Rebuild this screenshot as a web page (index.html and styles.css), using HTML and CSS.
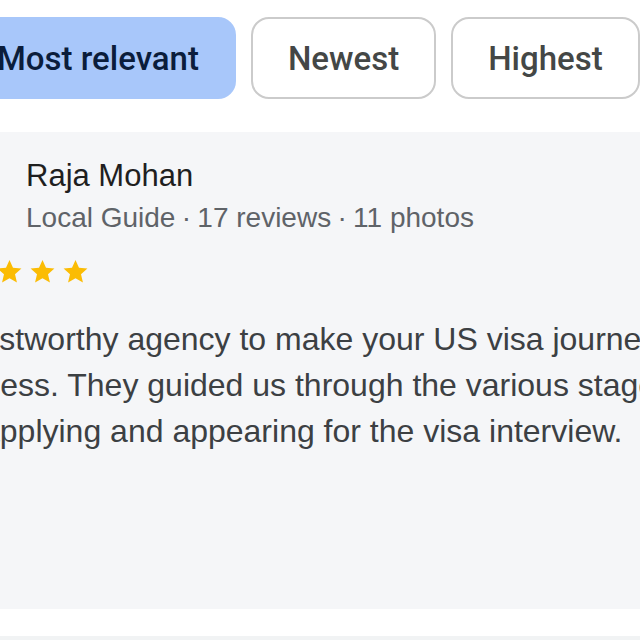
FILE: index.html
```html
<!DOCTYPE html>
<html lang="en">
<head>
<meta charset="utf-8">
<title>Reviews</title>
<link rel="stylesheet" href="styles.css">
</head>
<body>
<div class="page">
  <div class="chips">
    <div class="chip chip-active">Most relevant</div>
    <div class="chip">Newest</div>
    <div class="chip">Highest</div>
  </div>
  <div class="card">
    <div class="name">Raja Mohan</div>
    <div class="meta">Local Guide <span class="dot">·</span> 17 reviews <span class="dot">·</span> 11 photos</div>
    <div class="stars">
      <svg class="star" viewBox="0 0 24 24"><path d="M12 1.8l3.1 6.9 7.5.7-5.7 5 1.7 7.4L12 17.9l-6.6 3.9 1.7-7.4-5.7-5 7.5-.7z"/></svg>
      <svg class="star" viewBox="0 0 24 24"><path d="M12 1.8l3.1 6.9 7.5.7-5.7 5 1.7 7.4L12 17.9l-6.6 3.9 1.7-7.4-5.7-5 7.5-.7z"/></svg>
      <svg class="star" viewBox="0 0 24 24"><path d="M12 1.8l3.1 6.9 7.5.7-5.7 5 1.7 7.4L12 17.9l-6.6 3.9 1.7-7.4-5.7-5 7.5-.7z"/></svg>
    </div>
    <div class="text">
      <div class="line l1">trustworthy agency to make your US visa journey</div>
      <div class="line l2">process. They guided us through the various stages</div>
      <div class="line l3">applying and appearing for the visa interview.</div>
    </div>
  </div>
  <div class="gap"></div>
  <div class="next"></div>
</div>
</body>
</html>
```
FILE: styles.css
```css
html, body {
  margin: 0;
  padding: 0;
  background: #ffffff;
}
.page {
  width: 640px;
  height: 640px;
  overflow: hidden;
  display: flex;
  flex-direction: column;
}
.chips {
  display: flex;
  gap: 15px;
  margin: 17px 0 0 -40px;
  white-space: nowrap;
}
.chip {
  flex: none;
  height: 82px;
  box-sizing: border-box;
  padding: 0 35px;
  display: flex;
  align-items: center;
  border: 2px solid #cbcbcb;
  border-radius: 18px;
  font-family: Roboto, "Liberation Sans", sans-serif;
  font-size: 33px;
  font-weight: 500;
  color: #444746;
  background: #ffffff;
}
.chip-active {
  background: #a8c7fa;
  border-color: #a8c7fa;
  color: #0b1d3b;
}
.card {
  margin-top: 33px;
  height: 477px;
  flex: none;
  background: #f5f6f8;
  box-sizing: border-box;
  padding-top: 26px;
  display: flex;
  flex-direction: column;
  font-family: "Liberation Sans", Arial, sans-serif;
}
.name {
  margin-left: 26px;
  font-size: 31px;
  line-height: 36px;
  color: #1f1f1f;
}
.meta {
  margin: 8px 0 0 26px;
  font-size: 28px;
  line-height: 32px;
  color: #5f6368;
  white-space: nowrap;
}
.dot {
  margin: 0 -1.5px;
}
.stars {
  margin: 24px 0 0 -4px;
  display: flex;
  gap: 6px;
}
.star {
  width: 27px;
  height: 27px;
  fill: #fbbc04;
}
.text {
  margin-top: 31px;
  font-size: 32px;
  line-height: 46px;
  color: #3c4043;
  white-space: nowrap;
}
.l1 { margin-left: -38px; }
.l2 { margin-left: -62px; }
.l3 { margin-left: -18px; }
.gap {
  height: 27px;
  flex: none;
}
.next {
  flex: 1;
  background: #f1f3f4;
}
```
